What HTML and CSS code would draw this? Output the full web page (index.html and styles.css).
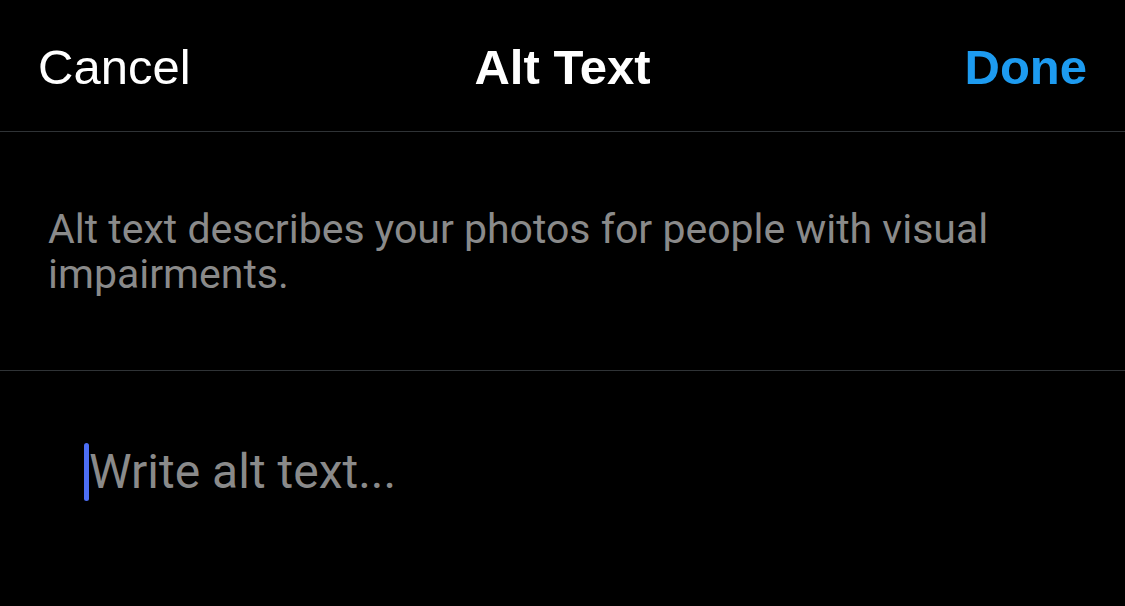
FILE: index.html
```html
<!DOCTYPE html>
<html lang="en">
<head>
<meta charset="utf-8">
<title>Alt Text</title>
<link rel="stylesheet" href="styles.css">
</head>
<body>
<div class="screen">
  <header class="navbar">
    <span class="nav-btn cancel">Cancel</span>
    <span class="nav-title">Alt Text</span>
    <span class="nav-btn done">Done</span>
  </header>
  <section class="description">
    <p>Alt text describes your photos for people with visual impairments.</p>
  </section>
  <section class="input-area">
    <div class="input-line">
      <span class="caret"></span>
      <span class="placeholder">Write alt text...</span>
    </div>
  </section>
</div>
</body>
</html>
```
FILE: styles.css
```css
html, body {
  margin: 0;
  padding: 0;
  background: #000;
}
.screen {
  width: 1125px;
  height: 606px;
  background: #000;
  overflow: hidden;
}
.navbar {
  display: grid;
  grid-template-columns: 1fr auto 1fr;
  align-items: center;
  height: 132px;
  padding: 2px 38px 0 38px;
  box-sizing: border-box;
  border-bottom: 1px solid #2f3336;
  font-family: "Liberation Sans", Arial, sans-serif;
  font-size: 49px;
  line-height: 56px;
  color: #fff;
}
.cancel {
  justify-self: start;
  font-weight: 400;
  color: #fff;
}
.nav-title {
  font-weight: 700;
  color: #fff;
}
.done {
  justify-self: end;
  font-weight: 700;
  color: #1d9bf0;
}
.description {
  padding: 75px 40px 73px 48px;
  border-bottom: 1px solid #2f3336;
}
.description p {
  margin: 0;
  font-family: Roboto, "Noto Sans", sans-serif;
  font-size: 41px;
  line-height: 45px;
  color: #8a8a8a;
}
.input-area {
  padding: 72px 0 0 84px;
}
.input-line {
  display: flex;
  align-items: center;
}
.caret {
  width: 5px;
  height: 58px;
  border-radius: 3px;
  background: #4c6ef5;
}
.placeholder {
  font-family: Roboto, "Noto Sans", sans-serif;
  font-size: 48px;
  line-height: 58px;
  color: #8a8a8a;
}
```
